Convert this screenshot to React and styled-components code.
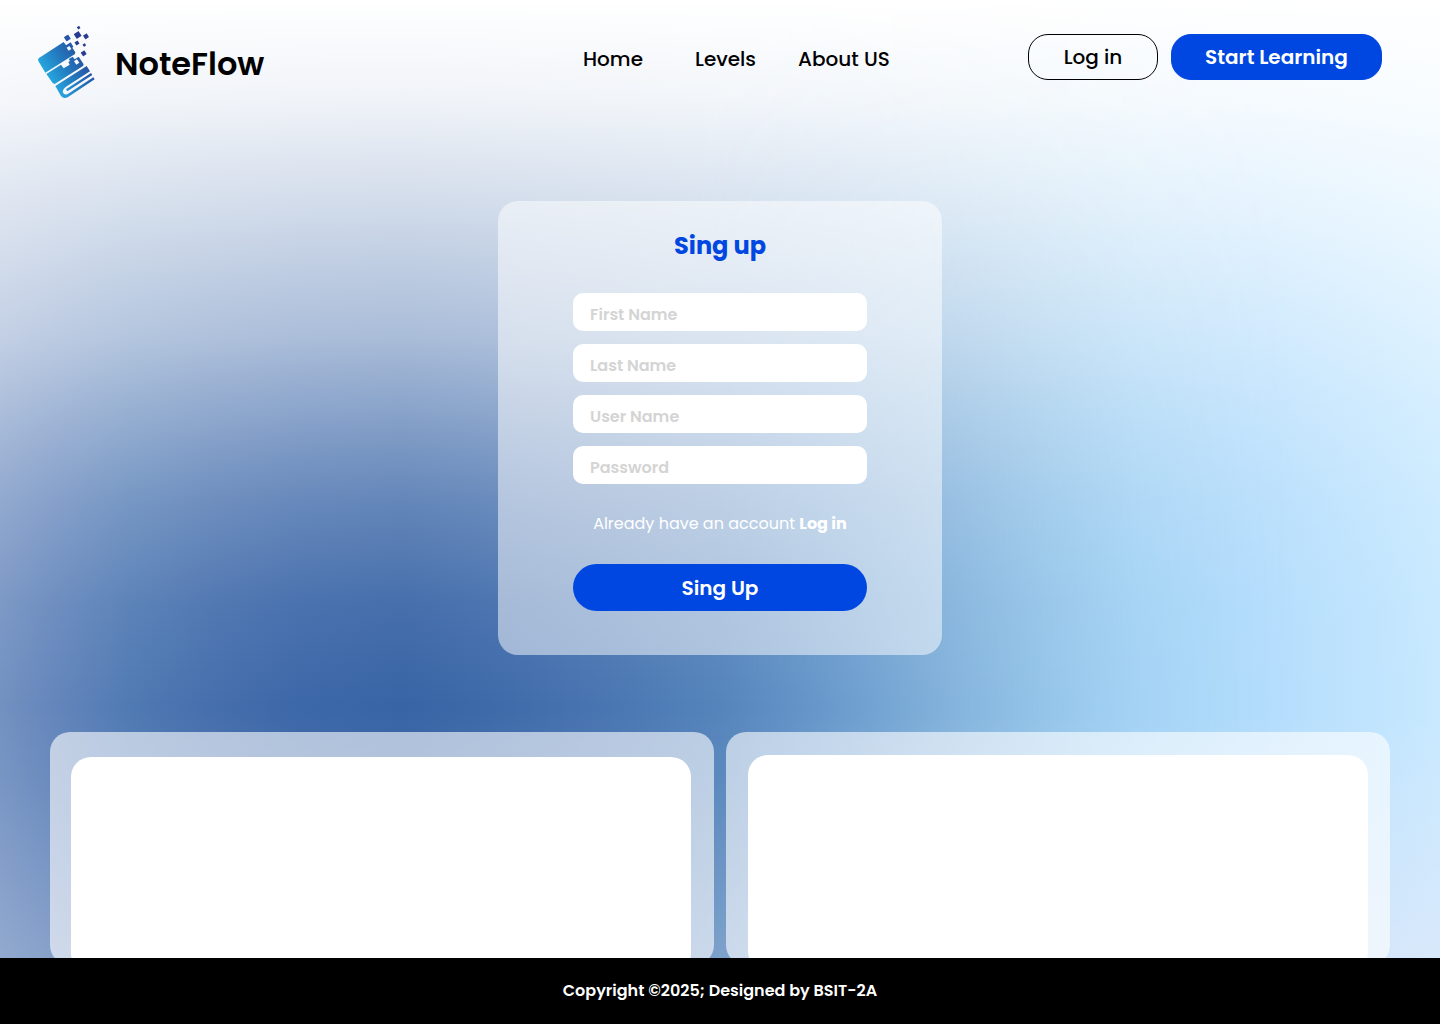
import React from "react";
import styled, { createGlobalStyle } from "styled-components";

const GlobalStyle = createGlobalStyle`
  *, *::before, *::after { box-sizing: border-box; }
  body {
    margin: 0;
    font-family: Poppins, Inter, "Liberation Sans", sans-serif;
    color: #000;
  }
  button, input { font: inherit; }
  a { color: inherit; text-decoration: none; }
`;

const horizon = `linear-gradient(
  90deg,
  #7391c1 0%,
  #6385bb 4%,
  #507ab3 9%,
  #456eac 15%,
  #3c67a8 21%,
  #3864a5 28%,
  #3d69a9 33%,
  #4975b1 42%,
  #5584bb 50%,
  #6898cb 57%,
  #84b3dc 66%,
  #96c6ea 73%,
  #a4d3f5 79%,
  #b2dcfc 87%,
  #c8e9ff 100%
)`;

/* The sky fades to white a little faster on the left than on the right,
   so the left version is laid over the right one and masked out. */
const Page = styled.div`
  position: relative;
  isolation: isolate;
  display: flex;
  flex-direction: column;
  min-height: 100vh;
  background:
    linear-gradient(
      180deg,
      #fff 0%,
      rgba(255, 255, 255, 0.87) 10%,
      rgba(255, 255, 255, 0.67) 20%,
      rgba(255, 255, 255, 0.45) 30%,
      rgba(255, 255, 255, 0.26) 39%,
      rgba(255, 255, 255, 0.1) 49%,
      rgba(255, 255, 255, 0.02) 59%,
      rgba(232, 232, 247, 0) 70%,
      rgba(232, 232, 247, 0.5) 93%
    ),
    ${horizon};

  &::before {
    content: "";
    position: absolute;
    inset: 0;
    z-index: -1;
    background:
      linear-gradient(
        180deg,
        #fff 0%,
        rgba(255, 255, 255, 0.92) 10%,
        rgba(255, 255, 255, 0.77) 20%,
        rgba(255, 255, 255, 0.57) 33%,
        rgba(255, 255, 255, 0.43) 39%,
        rgba(255, 255, 255, 0.32) 44%,
        rgba(255, 255, 255, 0.22) 49%,
        rgba(255, 255, 255, 0.07) 59%,
        rgba(255, 255, 255, 0) 69%,
        rgba(255, 255, 255, 0.04) 76%,
        rgba(255, 255, 255, 0.22) 93%
      ),
      ${horizon};
    mask-image: linear-gradient(90deg, #000 48%, transparent 90%);
  }
`;

const Header = styled.header`
  display: grid;
  grid-template-columns: minmax(0, 545fr) minmax(0, 445fr) auto;
  align-items: start;
  padding: 25px 58px 0 38px;
`;

const Brand = styled.a`
  display: flex;
  align-items: end;
  gap: 19px;
  font-size: 32px;
  font-weight: 600;
  line-height: 70px;
`;

const LogoMark = styled.svg`
  width: 58px;
  height: 74px;
`;

const Nav = styled.nav`
  display: grid;
  grid-template-columns: 112px 103px auto;
  justify-content: start;
  padding-top: 19px;
  font-size: 20px;
  font-weight: 500;
  line-height: 30px;
  white-space: nowrap;
`;

const Actions = styled.div`
  display: flex;
  gap: 13px;
  padding-top: 9px;
`;

const HeaderButton = styled.button`
  width: ${(p) => (p.$primary ? "211px" : "130px")};
  height: 46px;
  padding: 0;
  border: 1px solid ${(p) => (p.$primary ? "#0047e1" : "#000")};
  border-radius: 20px;
  background: ${(p) => (p.$primary ? "#0047e1" : "transparent")};
  color: ${(p) => (p.$primary ? "#fff" : "#000")};
  font-size: 20px;
  font-weight: ${(p) => (p.$primary ? 600 : 500)};
  line-height: 30px;
  cursor: pointer;
`;

const Main = styled.main`
  flex: 1;
  display: flex;
  flex-direction: column;
`;

const SignUpCard = styled.form`
  display: flex;
  flex-direction: column;
  align-self: center;
  width: 444px;
  margin: 102px 0 77px;
  padding: 27px 75px 44px;
  border-radius: 20px;
  background: rgba(255, 255, 255, 0.5);
`;

const Title = styled.h1`
  margin: 0 0 29px;
  color: #0047e1;
  font-size: 24px;
  font-weight: 700;
  line-height: 36px;
  text-align: center;
`;

const Fields = styled.div`
  display: grid;
  gap: 13px;
`;

const Field = styled.input`
  width: 100%;
  height: 38px;
  padding: 4px 17px 0;
  border: 0;
  border-radius: 10px;
  background: #fff;
  font-size: 16px;
  font-weight: 600;
  &::placeholder { color: #d4d4d4; opacity: 1; }
`;

const Hint = styled.p`
  margin: 27px 0;
  color: #fff;
  font-size: 16px;
  line-height: 26px;
  text-align: center;
  white-space: nowrap;
  a { font-weight: 700; }
`;

const Submit = styled.button`
  height: 47px;
  padding: 0;
  border: 0;
  border-radius: 24px;
  background: #0047e1;
  color: #fff;
  font-size: 20px;
  font-weight: 600;
  line-height: 30px;
  cursor: pointer;
`;

const Panels = styled.section`
  flex: 1 0 226px;
  height: 226px;
  display: grid;
  grid-template-columns: 1fr 1fr;
  gap: 12px;
  padding: 0 50px;
  overflow: hidden;
`;

const Panel = styled.div`
  height: 233px;
  padding: ${(p) => p.$inset};
  border-radius: 20px;
  background: rgba(255, 255, 255, 0.6);
`;

const PanelBody = styled.div`
  height: 216px;
  border-radius: 20px;
  background: #fff;
`;

const Footer = styled.footer`
  padding: 20px;
  background: #000;
  color: #fff;
  font-size: 16px;
  font-weight: 600;
  line-height: 26px;
  text-align: center;
`;

const PIXELS = [
  [176, 53, 8],
  [173, 75, 17],
  [198, 79, 13],
  [142, 84, 15],
  [171, 99, 11],
  [193, 105, 8],
  [191, 130, 13],
];

function Logo() {
  return (
    <LogoMark viewBox="54 45 174 222" aria-hidden="true">
      <defs>
        <linearGradient id="book" gradientUnits="userSpaceOnUse" x1="90" y1="205" x2="192" y2="140">
          <stop offset="0" stopColor="#25a4dd" />
          <stop offset="0.5" stopColor="#2378bd" />
          <stop offset="1" stopColor="#2650a2" />
        </linearGradient>
      </defs>
      <g fill="url(#book)">
        <path
          fillRule="evenodd"
          d="M57 144 L131 96 L138 106 L152 97 L160 110 L157 113 L166 127 L165 132 L76 188 L55 153 Q53 147 57 144 Z M140 113 L148 108 L154 117 L146 122 Z"
        />
        <path
          fillRule="evenodd"
          d="M79 192 L123 164 L131 175 L149 164 L145 156 L150 153 L146 147 L158 140 L164 148 L176 140 L191 163 L189 168 L104 222 L98 219 Z M162 154 L171 148 L178 158 L169 164 Z"
        />
        <path d="M106 228 L200 168 L210 184 L138 230 Q124 240 130 250 Q137 258 148 249 L220 202 L224 208 L143 262 Q131 268 123 258 Z" />
      </g>
      <path d="M140 241 L215 192" stroke="url(#book)" strokeWidth="7" fill="none" />
      {PIXELS.map(([x, y, s]) => (
        <rect
          key={`${x}-${y}`}
          x={x - s / 2}
          y={y - s / 2}
          width={s}
          height={s}
          rx="1"
          fill={x < 150 ? "#2755a4" : "#2a3c92"}
          transform={`rotate(-33 ${x} ${y})`}
        />
      ))}
    </LogoMark>
  );
}

const FIELDS = [
  { name: "firstName", label: "First Name", type: "text" },
  { name: "lastName", label: "Last Name", type: "text" },
  { name: "userName", label: "User Name", type: "text" },
  { name: "password", label: "Password", type: "password" },
];

export default function App() {
  return (
    <>
      <GlobalStyle />
      <Page>
        <Header>
          <Brand href="#">
            <Logo />
            NoteFlow
          </Brand>
          <Nav>
            <a href="#home">Home</a>
            <a href="#levels">Levels</a>
            <a href="#about">About US</a>
          </Nav>
          <Actions>
            <HeaderButton type="button">Log in</HeaderButton>
            <HeaderButton type="button" $primary>Start Learning</HeaderButton>
          </Actions>
        </Header>
        <Main>
          <SignUpCard onSubmit={(e) => e.preventDefault()}>
            <Title>Sing up</Title>
            <Fields>
              {FIELDS.map((f) => (
                <Field key={f.name} name={f.name} type={f.type} placeholder={f.label} aria-label={f.label} />
              ))}
            </Fields>
            <Hint>
              Already have an account <a href="#login">Log in</a>
            </Hint>
            <Submit type="submit">Sing Up</Submit>
          </SignUpCard>
          <Panels>
            <Panel $inset="25px 23px 0 21px"><PanelBody /></Panel>
            <Panel $inset="23px 22px 0"><PanelBody /></Panel>
          </Panels>
        </Main>
        <Footer>Copyright ©2025; Designed by BSIT-2A</Footer>
      </Page>
    </>
  );
}
